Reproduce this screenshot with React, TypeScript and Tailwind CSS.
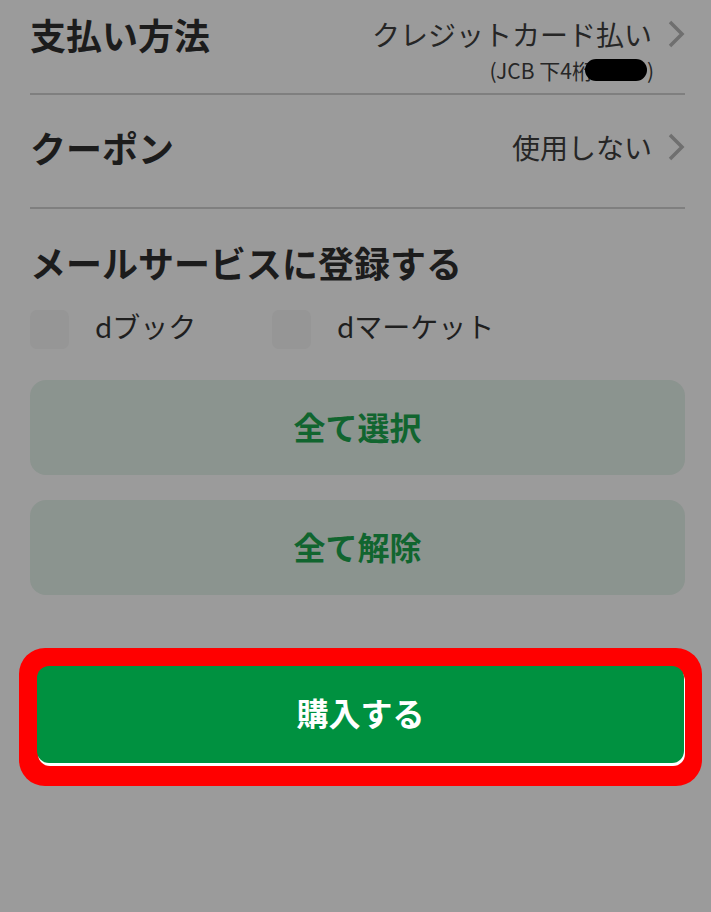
// Purchase confirmation screen, dimmed under an overlay, with the buy button highlighted.

const font = { fontFamily: '"Noto Sans CJK JP", "Noto Sans", sans-serif' };

// ── Chevron drawn as a thin grey arrow ────────────────────────────
function Chevron() {
  return (
    <svg width="18" height="28" viewBox="0 0 18 28" className="shrink-0">
      <polyline points="3,2 15,14 3,26" fill="none" stroke="#6f6f6f" strokeWidth="3.5" />
    </svg>
  );
}

function Checkbox({ label, wide }: { label: string; wide?: boolean }) {
  return (
    <div className={`flex items-center gap-[26px] ${wide ? "w-[242px]" : ""}`}>
      <div className="w-[39px] h-[39px] rounded-[7px] bg-[#969696]" />
      <span className="relative -top-[3px] text-[28px] leading-[39px] text-[#1f1f1f]">{label}</span>
    </div>
  );
}

export default function App() {
  return (
    <div style={font} className="min-h-screen w-full bg-[#9b9b9b] pl-[30px] pr-[26px] pb-[120px]">

      {/* Payment method */}
      <div className="flex justify-between pt-[14px] pb-[9px]">
        <h2 className="text-[36px] leading-[40px] font-bold text-[#1c1c1c]">支払い方法</h2>
        <div className="flex flex-col items-end">
          <div className="flex items-center gap-[15px]">
            <span className="text-[28px] leading-[40px] text-[#262626]">クレジットカード払い</span>
            <Chevron />
          </div>
          <div className="mt-[2px] pr-[31px] text-[21px] leading-[28px] text-[#262626] flex items-center">
            <span>(JCB 下4桁</span>
            <span className="inline-block w-[62px] h-[22px] rounded-full bg-black -ml-[8px]" />
            <span>)</span>
          </div>
        </div>
      </div>
      <div className="h-[2px] bg-[#7f7f7f]" />

      {/* Coupon */}
      <div className="flex justify-between items-center pt-[32px] pb-[40px]">
        <h2 className="text-[36px] leading-[40px] font-bold text-[#1c1c1c]">クーポン</h2>
        <div className="flex items-center gap-[15px]">
          <span className="text-[28px] leading-[40px] text-[#262626]">使用しない</span>
          <Chevron />
        </div>
      </div>
      <div className="h-[2px] bg-[#7f7f7f]" />

      {/* Mail service */}
      <h2 className="mt-[31px] text-[36px] leading-[44px] font-bold text-[#1c1c1c]">
        メールサービスに登録する
      </h2>
      <div className="mt-[26px] flex items-center">
        <Checkbox label="dブック" wide />
        <Checkbox label="dマーケット" />
      </div>

      <div className="mt-[31px] flex flex-col gap-[25px]">
        <button className="h-[95px] pb-[4px] rounded-[16px] bg-[#8b948f] text-[32px] font-bold text-[#11652f]">
          全て選択
        </button>
        <button className="h-[95px] pb-[4px] rounded-[16px] bg-[#8b948f] text-[32px] font-bold text-[#11652f]">
          全て解除
        </button>
      </div>

      {/* Buy button, outlined in red */}
      <div className="mt-[53px] -ml-[11px] -mr-[17px] border-[18px] border-b-[19px] border-[#ff0000] rounded-[26px] bg-[#ff0000]">
        <div className="pb-[4px]">
          <button className="w-full h-[97px] pb-[6px] rounded-[12px] bg-[#009140] text-[32px] font-bold text-white shadow-[1px_3px_0_#ffffff]">
            購入する
          </button>
        </div>
      </div>
    </div>
  );
}
